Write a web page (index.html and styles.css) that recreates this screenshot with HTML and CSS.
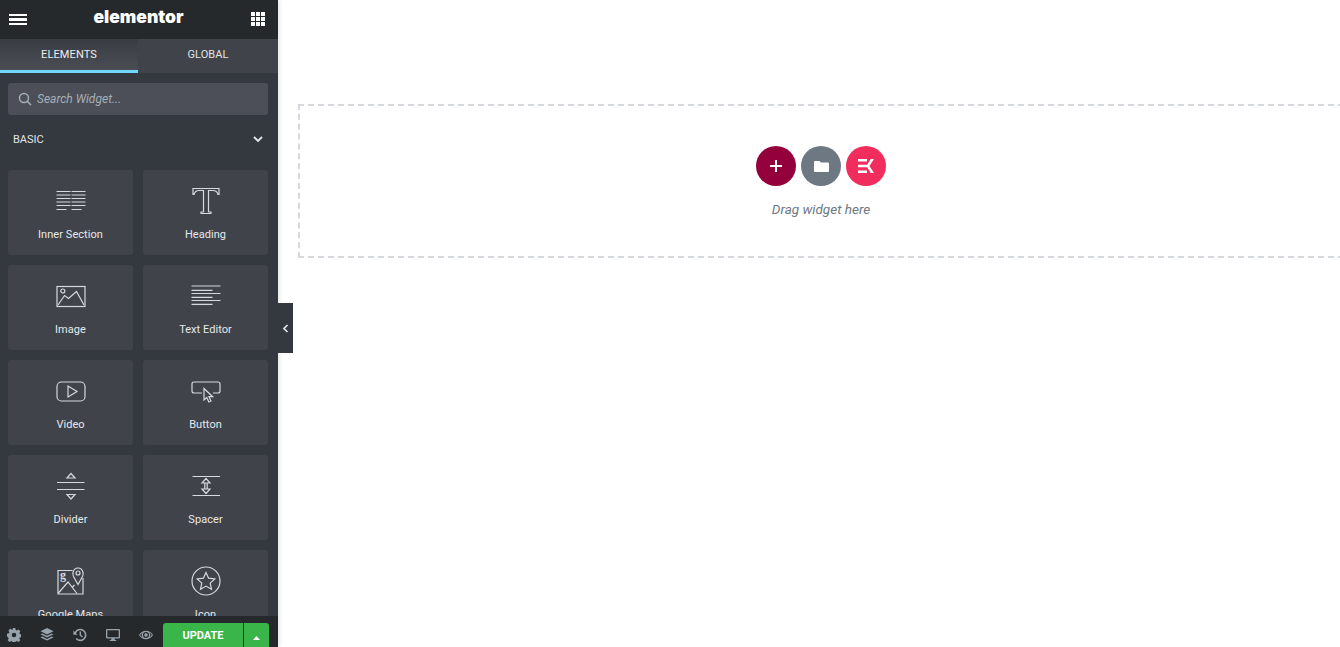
FILE: index.html
```html
<!DOCTYPE html>
<html lang="en">
<head>
    <meta charset="UTF-8">
    <title>Elementor</title>
    <link rel="stylesheet" href="styles.css">
</head>
<body>

<div class="editor">
    <aside class="panel">
        <header class="panel-header">
            <span class="hamburger"><i></i><i></i><i></i></span>
            <span class="logo">elementor</span>
            <svg class="apps" width="14" height="14" viewBox="0 0 14 14" fill="#fff">
                <path d="M0 0h4v4H0zM5 0h4v4H5zM10 0h4v4h-4zM0 5h4v4H0zM5 5h4v4H5zM10 5h4v4h-4zM0 10h4v4H0zM5 10h4v4H5zM10 10h4v4h-4z"/>
            </svg>
        </header>

        <nav class="tabs">
            <div class="tab active">ELEMENTS</div>
            <div class="tab">GLOBAL</div>
        </nav>

        <div class="panel-body">
            <div class="search">
                <svg width="14" height="14" viewBox="0 0 14 14" fill="none" stroke="#a4afb7" stroke-width="1.5">
                    <circle cx="6" cy="6" r="4.5"/>
                    <path d="M9.4 9.4 13 13"/>
                </svg>
                <input type="text" placeholder="Search Widget...">
            </div>

            <div class="category">
                <span>BASIC</span>
                <svg width="10" height="7" viewBox="0 0 10 7" fill="none" stroke="#e6e9ec" stroke-width="1.8">
                    <path d="M1 1l4 4 4-4"/>
                </svg>
            </div>

            <div class="widgets">
                <div class="widget">
                    <svg class="widget-icon" viewBox="0 0 32 32">
                        <path d="M1.5 7.5h14M16.5 7.5h14M1.5 11h14M16.5 11h14M1.5 14.5h14M16.5 14.5h14M1.5 18h14M16.5 18h14M1.5 21.500h14M16.5 21.500h14M1.500 25.500h10M16.5 25.500h10"/>
                    </svg>
                    <span>Inner Section</span>
                </div>
                <div class="widget">
                    <svg class="widget-icon" viewBox="0 0 32 32">
                        <path d="M3 4.500H29V10.500H28Q27 6.500 23 6.500H18.500V28H21V29.500H11V28H13.500V6.500H9Q5 6.500 4 10.500H3Z"/>
                    </svg>
                    <span>Heading</span>
                </div>
                <div class="widget">
                    <svg class="widget-icon" viewBox="0 0 32 32">
                        <rect x="2" y="7.500" width="28" height="20"/>
                        <circle cx="7.800" cy="12" r="2"/>
                        <path d="M3 26 9.500 16.500 13.500 19.500 21.500 12.500 29 26"/>
                    </svg>
                    <span>Image</span>
                </div>
                <div class="widget">
                    <svg class="widget-icon" viewBox="0 0 32 32">
                        <path d="M1.500 7h29M1.500 11.300h21M1.500 14.500h29M1.500 18.300h21M1.500 21.500h29M1.500 25.300h21"/>
                    </svg>
                    <span>Text Editor</span>
                </div>
                <div class="widget">
                    <svg class="widget-icon" viewBox="0 0 32 32">
                        <rect x="2" y="8" width="28" height="19" rx="4.500"/>
                        <path d="M13 12v11l9-5.500z"/>
                    </svg>
                    <span>Video</span>
                </div>
                <div class="widget">
                    <svg class="widget-icon" viewBox="0 0 32 32">
                        <path d="M12 19H4Q2 19 2 17V10Q2 8 4 8H28Q30 8 30 10V17Q30 19 28 19H23"/>
                        <path d="M14 14.500V26L16.800 23.500 18.800 28 21 27 19 22.700H22.700Z"/>
                    </svg>
                    <span>Button</span>
                </div>
                <div class="widget">
                    <svg class="widget-icon" viewBox="0 0 32 32">
                        <path d="M2 13.500H29.500M2 20.500H29.500"/>
                        <path d="M16 4.500 20 9H12ZM12 25.500H20L16 30Z"/>
                    </svg>
                    <span>Divider</span>
                </div>
                <div class="widget">
                    <svg class="widget-icon" viewBox="0 0 32 32">
                        <path d="M2.500 7.500H30M2.500 26.500H30"/>
                        <path d="M16 9.500 20 14H12ZM12 20H20L16 24.500ZM14.800 14V20M17.200 14V20"/>
                    </svg>
                    <span>Spacer</span>
                </div>
                <div class="widget">
                    <svg class="widget-icon" viewBox="0 0 32 32">
                        <path d="M17.500 6.500H3V30H28V14"/>
                        <path d="M3 29.500 13 18 22 29.500M17 23.500 19.500 21"/>
                        <path d="M23 20.500 18.500 12.500Q17.500 10.500 18 8.500 19 4 23 4 27 4 28 8.500 28.500 10.500 27.500 12.500Z"/>
                        <circle cx="23" cy="9" r="2"/>
                        <text class="map-letter" x="8" y="15">g</text>
                    </svg>
                    <span>Google Maps</span>
                </div>
                <div class="widget">
                    <svg class="widget-icon" viewBox="0 0 32 32">
                        <circle cx="16" cy="17" r="14"/>
                        <path d="M16 8.500 18.600 14.200 24.800 14.900 20.200 19.100 21.500 25.200 16 22.100 10.500 25.200 11.800 19.100 7.200 14.900 13.400 14.200Z"/>
                    </svg>
                    <span>Icon</span>
                </div>
            </div>
        </div>

        <footer class="panel-footer">
            <div class="tools">
                <svg width="14" height="14" viewBox="0 0 14 14">
                    <path fill-rule="evenodd" d="M5.700 0h2.600l.4 1.900 1.100.5 1.700-1 1.800 1.800-1 1.700.5 1.100 1.900.4v2.600l-1.900.4-.5 1.100 1 1.700-1.800 1.800-1.700-1-1.100.5-.4 1.900H5.700l-.4-1.900-1.100-.5-1.700 1-1.800-1.800 1-1.700-.5-1.100L0 8.300V5.700l1.900-.4.500-1.100-1-1.700 1.800-1.800 1.700 1 1.100-.5zM7 4.700a2.300 2.300 0 1 0 0 4.600 2.300 2.300 0 0 0 0-4.600z"/>
                </svg>
                <svg width="14" height="14" viewBox="0 0 14 14">
                    <path d="M7 0l6.500 3.200L7 6.400.5 3.200z"/>
                    <path d="M2.200 5.400 7 7.800l4.800-2.400 1.700.9L7 9.500.5 6.300z"/>
                    <path d="M2.200 8.500 7 10.900l4.800-2.400 1.700.9L7 12.600.5 9.400z"/>
                </svg>
                <svg width="14" height="14" viewBox="0 0 14 14">
                    <path d="M7.300.8a6.200 6.200 0 1 1-4.700 10.300l1.200-1.100A4.600 4.600 0 1 0 3 5.200l1.500 1.500H.4V2.600l1.500 1.400A6.200 6.200 0 0 1 7.300.8z"/>
                    <path d="M6.600 3.600h1.400v3.300l2 1.500-.8 1.100-2.600-1.900z"/>
                </svg>
                <svg width="14" height="14" viewBox="0 0 14 14">
                    <path fill-rule="evenodd" d="M1 1h12a1 1 0 0 1 1 1v7.500a1 1 0 0 1-1 1H8.500l.4 1.500h1.300v1H3.800v-1h1.300l.4-1.500H1a1 1 0 0 1-1-1V2a1 1 0 0 1 1-1zm.3 1.300v6.900h11.400V2.300z"/>
                </svg>
                <svg width="14" height="14" viewBox="0 0 14 14">
                    <path fill-rule="evenodd" d="M7 2.700c3 0 5.600 1.700 7 4.300-1.400 2.600-4 4.300-7 4.300S1.400 9.600 0 7c1.400-2.600 4-4.300 7-4.300zM7 4a3 3 0 1 0 0 6 3 3 0 0 0 0-6zm-6 3a7.600 7.600 0 0 0 3 2.800A4 4 0 0 1 4 4.200 7.600 7.600 0 0 0 1.200 7zm12 0a7.600 7.600 0 0 0-3-2.800 4 4 0 0 1 0 5.600A7.600 7.600 0 0 0 12.800 7z"/>
                    <circle cx="7" cy="7" r="1.800"/>
                </svg>
            </div>
            <div class="publish">
                <button class="update" type="button">UPDATE</button>
                <button class="update-more" type="button">
                    <svg width="7" height="4" viewBox="0 0 7 4" fill="#fff"><path d="M3.500 0l3.500 4H0z"/></svg>
                </button>
            </div>
        </footer>
    </aside>

    <div class="collapse">
        <svg width="6" height="9" viewBox="0 0 6 9" fill="none" stroke="#e6e9ec" stroke-width="1.600">
            <path d="M4.500 1 1 4.500 4.500 8"/>
        </svg>
    </div>

    <main class="canvas">
        <div class="dropzone">
            <div class="add-buttons">
                <span class="round add">
                    <svg width="12" height="12" viewBox="0 0 12 12" fill="#fff"><path d="M5 0h2v5h5v2H7v5H5V7H0V5h5z"/></svg>
                </span>
                <span class="round template">
                    <svg width="15" height="11" viewBox="0 0 15 11" fill="#fff"><path d="M1 0h4.500l1.500 1.500h7a1 1 0 0 1 1 1V10a1 1 0 0 1-1 1H1a1 1 0 0 1-1-1V1a1 1 0 0 1 1-1z"/></svg>
                </span>
                <span class="round kit">
                    <svg width="16" height="14" viewBox="0 0 16 14" fill="#fff"><path d="M0 0h9v2.600H0zM0 5.700h9v2.600H0zM0 11.400h9V14H0zM12.800 0H16l-4.600 7 4.600 7h-3.200L8.400 7z"/></svg>
                </span>
            </div>
            <p class="drop-text">Drag widget here</p>
        </div>
    </main>
</div>

</body>
</html>
```

FILE: styles.css
```css
html, body {
    margin: 0;
    padding: 0;
    height: 100%;
    overflow: hidden;
    background-color: #fff;
    font-family: Roboto, Arial, sans-serif;
}
.editor {
    position: relative;
    display: flex;
    height: 100vh;
}
.panel {
    width: 278px;
    flex-shrink: 0;
    display: flex;
    flex-direction: column;
    background-color: #34383f;
    box-shadow: 1px 0 5px rgba(0, 0, 0, 0.12);
    z-index: 1;
}
.panel-header {
    height: 39px;
    flex-shrink: 0;
    display: flex;
    align-items: center;
    justify-content: space-between;
    padding: 0 13px 0 9px;
    background-color: #26292c;
}
.hamburger {
    width: 18px;
    display: flex;
    flex-direction: column;
    gap: 2px;
}
.hamburger i {
    display: block;
    height: 2.5px;
    background-color: #fff;
}
.logo {
    font-family: Inter, sans-serif;
    font-size: 17.500px;
    font-weight: 900;
    color: #fff;
    margin-top: -7px;
    margin-left: -1px;
}
.apps {
    margin-top: -1px;
}
.tabs {
    height: 34px;
    flex-shrink: 0;
    display: flex;
}
.tab {
    width: 140px;
    display: flex;
    align-items: center;
    justify-content: center;
    padding-bottom: 4px;
    box-sizing: border-box;
    font-size: 11px;
    font-weight: 400;
    letter-spacing: 0.1px;
    color: #e0e4e8;
    background-color: #404349;
}
.tab.active {
    width: 138px;
    background: linear-gradient(to bottom, #393c42, #4a4d54);
    border-bottom: 3px solid #71d7f7;
    padding-bottom: 1px;
    color: #eceef1;
}
.panel-body {
    flex: 1;
    overflow: hidden;
    padding: 10px 10px 0 8px;
}
.search {
    height: 32px;
    display: flex;
    align-items: center;
    gap: 5px;
    padding-left: 10px;
    background-color: #4c4f57;
    border-radius: 3px;
}
.search input {
    flex: 1;
    min-width: 0;
    padding: 0;
    border: none;
    outline: none;
    background: none;
    font-family: inherit;
    font-size: 12px;
    font-style: italic;
    color: #a4afb7;
}
.search input::placeholder {
    color: #a4afb7;
    opacity: 1;
}
.category {
    height: 24px;
    margin: 12px 0 19px;
    display: flex;
    align-items: center;
    justify-content: space-between;
    padding: 0 5px;
    font-size: 11px;
    font-weight: 400;
    color: #e0e4e8;
}
.widgets {
    display: grid;
    grid-template-columns: 125px 125px;
    grid-auto-rows: 85px;
    gap: 10px;
}
.widget {
    display: flex;
    flex-direction: column;
    align-items: center;
    padding-top: 14px;
    box-sizing: border-box;
    background-color: #404349;
    border-radius: 3px;
    font-size: 11px;
    font-weight: 400;
    letter-spacing: 0.05px;
    color: #e6e9ec;
}
.widget span {
    margin-top: 12px;
}
.widget-icon {
    width: 32px;
    height: 32px;
    fill: none;
    stroke: #d5dadf;
    stroke-width: 1.200;
}
.map-letter {
    font-family: "Liberation Serif", serif;
    font-size: 12px;
    font-weight: 700;
    text-anchor: middle;
    fill: #d5dadf;
    stroke: none;
}
.panel-footer {
    height: 31px;
    flex-shrink: 0;
    display: flex;
    justify-content: space-between;
    background-color: #26292c;
}
.tools {
    display: flex;
    gap: 19px;
    padding: 12px 0 0 7px;
    fill: #98a3ac;
}
.publish {
    display: flex;
    gap: 1px;
    align-self: flex-end;
    margin-right: 9px;
}
.publish button {
    height: 24px;
    padding: 0;
    border: none;
    color: #fff;
    background-color: #39b54a;
}
.update {
    width: 80px;
    border-radius: 3px 0 0 0;
    font-family: inherit;
    font-size: 11px;
    font-weight: 700;
}
.update-more {
    width: 25px;
    border-radius: 0 3px 0 0;
}
.collapse {
    position: absolute;
    left: 278px;
    top: 303px;
    width: 15px;
    height: 50px;
    display: flex;
    align-items: center;
    justify-content: center;
    background-color: #34383f;
    z-index: 2;
}
.canvas {
    flex: 1;
    min-width: 0;
    overflow: hidden;
    padding: 104px 0 0 20px;
}
.dropzone {
    width: 1046px;
    height: 154px;
    box-sizing: border-box;
    padding-top: 40px;
    border: 2px dashed #d5d8dc;
    text-align: center;
}
.add-buttons {
    display: flex;
    justify-content: center;
    gap: 5px;
}
.round {
    width: 40px;
    height: 40px;
    display: flex;
    align-items: center;
    justify-content: center;
    border-radius: 50%;
}
.add {
    background-color: #93003c;
}
.template {
    background-color: #6d7882;
}
.kit {
    background-color: #f12d5e;
}
.drop-text {
    margin: 15px 0 0;
    font-size: 13.500px;
    line-height: 17px;
    font-style: italic;
    color: #6d7882;
}
```
